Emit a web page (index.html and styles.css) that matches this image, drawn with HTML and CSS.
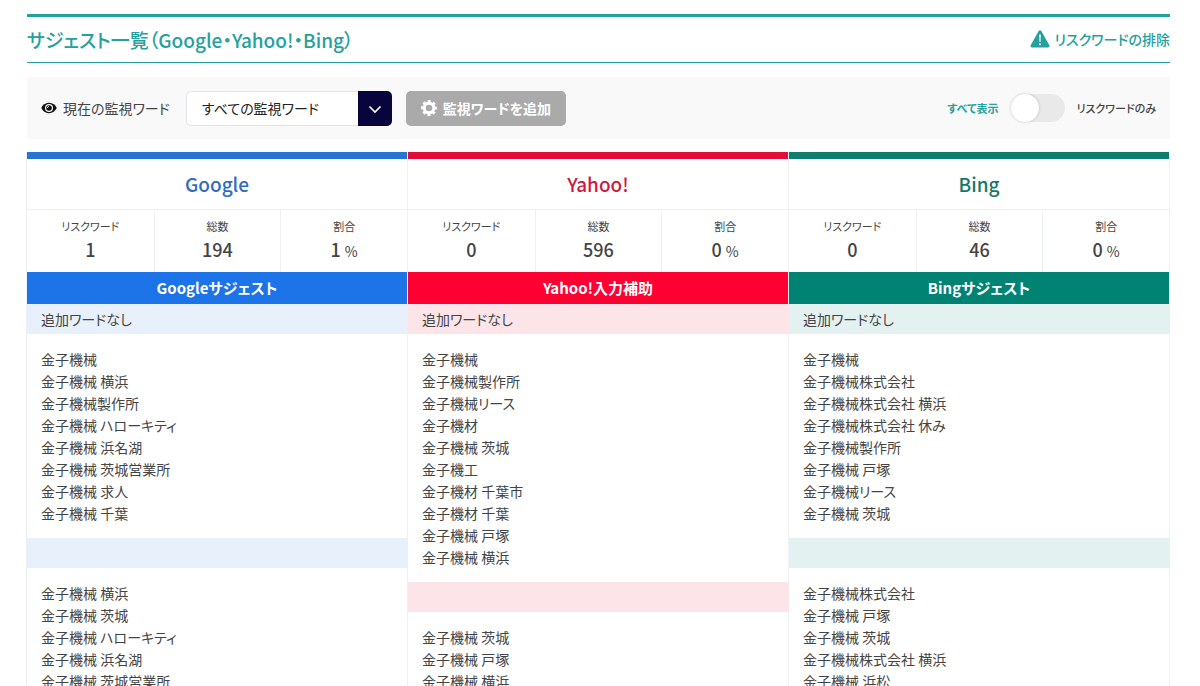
FILE: index.html
```html
<!DOCTYPE html>
<html lang="ja">
<head>
<meta charset="utf-8">
<meta name="viewport" content="width=device-width, initial-scale=1">
<title>サジェスト一覧</title>
<link rel="stylesheet" href="styles.css">
</head>
<body>
<main class="page">
  <header class="page-head">
    <h1 class="page-title">サジェスト一覧（Google・Yahoo!・Bing）</h1>
    <a class="risk-link" href="#">
      <svg class="icon-warning" viewBox="0 0 20 18" aria-hidden="true">
        <path d="M8.700 1.100a1.500 1.500 0 0 1 2.600 0l8 14.200a1.500 1.500 0 0 1-1.300 2.200H2a1.500 1.500 0 0 1-1.300-2.200z" fill="currentColor"/>
        <path d="M9.200 4.500h1.600l-.3 7.500h-1z" fill="#fff"/>
        <circle cx="10" cy="14.200" r="1" fill="#fff"/>
      </svg>
      リスクワードの排除
    </a>
  </header>

  <section class="toolbar">
    <label class="watch-label" for="watch">
      <svg class="icon-eye" viewBox="0 0 16 12" aria-hidden="true">
        <path d="M8 .8C4.400.8 1.600 3 .3 6c1.300 3 4.100 5.200 7.700 5.200S14.400 9 15.700 6C14.400 3 11.600.8 8 .8z" fill="#111"/>
        <circle cx="8" cy="6" r="4" fill="#f9f9f9"/>
        <circle cx="8" cy="6" r="2.800" fill="#111"/>
        <path d="M6.400 6A1.600 1.600 0 0 1 8 4.400" fill="none" stroke="#f9f9f9" stroke-width=".8"/>
      </svg>
      現在の監視ワード
    </label>
    <div class="select-box">
      <select class="select" id="watch"><option>すべての監視ワード</option></select>
      <span class="select-arrow">
        <svg viewBox="0 0 14 9" width="14" height="9" aria-hidden="true"><path d="M1.500 1.500 7 7l5.500-5.500" fill="none" stroke="#fff" stroke-width="1.600"/></svg>
      </span>
    </div>
    <button class="add-button" type="button">
      <svg class="icon-gear" viewBox="0 0 16 16" aria-hidden="true">
        <g fill="none" stroke="#fff">
          <circle cx="8" cy="8" r="4.800" stroke-width="3"/>
          <circle cx="8" cy="8" r="6.800" stroke-width="2.200" stroke-dasharray="3.100 2.240" stroke-dashoffset="1.550"/>
        </g>
      </svg>
      監視ワードを追加
    </button>
    <div class="filter">
      <span class="filter-all">すべて表示</span>
      <input class="switch" type="checkbox" role="switch" id="risk-only">
      <label for="risk-only">リスクワードのみ</label>
    </div>
  </section>

  <div class="engines">
    <section class="engine google">
      <h2 class="engine-name">Google</h2>
      <dl class="stats">
        <div class="stat"><dt>リスクワード</dt><dd>1</dd></div>
        <div class="stat"><dt>総数</dt><dd>194</dd></div>
        <div class="stat"><dt>割合</dt><dd>1 <small>%</small></dd></div>
      </dl>
      <h3 class="band">Googleサジェスト</h3>
      <p class="subband">追加ワードなし</p>
      <ul class="words">
        <li>金子機械</li>
        <li>金子機械 横浜</li>
        <li>金子機械製作所</li>
        <li>金子機械 ハローキティ</li>
        <li>金子機械 浜名湖</li>
        <li>金子機械 茨城営業所</li>
        <li>金子機械 求人</li>
        <li>金子機械 千葉</li>
      </ul>
      <p class="subband"></p>
      <ul class="words">
        <li>金子機械 横浜</li>
        <li>金子機械 茨城</li>
        <li>金子機械 ハローキティ</li>
        <li>金子機械 浜名湖</li>
        <li>金子機械 茨城営業所</li>
      </ul>
    </section>

    <section class="engine yahoo">
      <h2 class="engine-name">Yahoo!</h2>
      <dl class="stats">
        <div class="stat"><dt>リスクワード</dt><dd>0</dd></div>
        <div class="stat"><dt>総数</dt><dd>596</dd></div>
        <div class="stat"><dt>割合</dt><dd>0 <small>%</small></dd></div>
      </dl>
      <h3 class="band">Yahoo!入力補助</h3>
      <p class="subband">追加ワードなし</p>
      <ul class="words">
        <li>金子機械</li>
        <li>金子機械製作所</li>
        <li>金子機械リース</li>
        <li>金子機材</li>
        <li>金子機械 茨城</li>
        <li>金子機工</li>
        <li>金子機材 千葉市</li>
        <li>金子機材 千葉</li>
        <li>金子機械 戸塚</li>
        <li>金子機械 横浜</li>
      </ul>
      <p class="subband"></p>
      <ul class="words">
        <li>金子機械 茨城</li>
        <li>金子機械 戸塚</li>
        <li>金子機械 横浜</li>
      </ul>
    </section>

    <section class="engine bing">
      <h2 class="engine-name">Bing</h2>
      <dl class="stats">
        <div class="stat"><dt>リスクワード</dt><dd>0</dd></div>
        <div class="stat"><dt>総数</dt><dd>46</dd></div>
        <div class="stat"><dt>割合</dt><dd>0 <small>%</small></dd></div>
      </dl>
      <h3 class="band">Bingサジェスト</h3>
      <p class="subband">追加ワードなし</p>
      <ul class="words">
        <li>金子機械</li>
        <li>金子機械株式会社</li>
        <li>金子機械株式会社 横浜</li>
        <li>金子機械株式会社 休み</li>
        <li>金子機械製作所</li>
        <li>金子機械 戸塚</li>
        <li>金子機械リース</li>
        <li>金子機械 茨城</li>
      </ul>
      <p class="subband"></p>
      <ul class="words">
        <li>金子機械株式会社</li>
        <li>金子機械 戸塚</li>
        <li>金子機械 茨城</li>
        <li>金子機械株式会社 横浜</li>
        <li>金子機械 浜松</li>
      </ul>
    </section>
  </div>
</main>
</body>
</html>
```
FILE: styles.css
```css
* { box-sizing: border-box; }

body {
  margin: 0;
  background: #fff;
  color: #444;
  font-family: "Noto Sans CJK JP", sans-serif;
  font-size: 14px;
  line-height: 22px;
  font-feature-settings: "palt";
}

h1, h2, h3, p, ul, dl, dd { margin: 0; padding: 0; }
ul { list-style: none; }

.page { padding: 14px 30px 0 27px; }

.page-head {
  display: flex;
  align-items: center;
  justify-content: space-between;
  height: 49px;
  border-top: 3px solid #24a19c;
  border-bottom: 1px solid #24a19c;
  color: #24a19c;
}

.page-title { font-size: 19px; font-weight: 500; }

.risk-link {
  display: flex;
  align-items: center;
  gap: 5px;
  padding-bottom: 2px;
  color: inherit;
  font-weight: 500;
  text-decoration: none;
}

.icon-warning { width: 20px; height: 18px; }

.toolbar {
  display: flex;
  align-items: center;
  gap: 14px;
  height: 62px;
  margin: 14px 0 13px;
  padding: 0 14px;
  background: #f9f9f9;
}

.watch-label { display: flex; align-items: center; gap: 6px; padding-right: 2px; }
.icon-eye { width: 16px; height: 12px; }

.select-box { position: relative; width: 206px; height: 35px; }

.select {
  width: 100%;
  height: 100%;
  padding: 0 48px 0 15px;
  border: 1px solid #e4e4e8;
  border-radius: 5px;
  appearance: none;
  background: #fff;
  color: #222;
  font: inherit;
  font-feature-settings: inherit;
}

.select-arrow {
  position: absolute;
  top: 0;
  right: 0;
  bottom: 0;
  display: grid;
  place-items: center;
  width: 34px;
  padding-top: 2px;
  border-radius: 0 5px 5px 0;
  background: #08053d;
  pointer-events: none;
}

.add-button {
  display: flex;
  align-items: center;
  justify-content: center;
  gap: 6px;
  width: 160px;
  height: 35px;
  padding: 0;
  border: 0;
  border-radius: 5px;
  background: #aaa;
  color: #fff;
  font: inherit;
  font-weight: 700;
  font-feature-settings: inherit;
}

.icon-gear { width: 16px; height: 16px; }

.filter {
  display: flex;
  align-items: center;
  gap: 12px;
  margin-left: auto;
  font-size: 11px;
  font-weight: 500;
}

.filter-all { color: #24a19c; font-weight: 700; }

.switch {
  width: 54px;
  height: 28px;
  margin: 0;
  border-radius: 14px;
  appearance: none;
  background: #e9e9e9;
}

.switch::before {
  content: "";
  display: block;
  width: 28px;
  height: 28px;
  border-radius: 50%;
  background: #fff;
  box-shadow: 0 0 3px rgba(0, 0, 0, 0.2);
}

.switch:checked::before { margin-left: auto; }

.engines { display: grid; grid-template-columns: repeat(3, 1fr); }

.engine { border-right: 1px solid #edf1f3; }
.engine:first-child { box-shadow: -1px 0 #edf1f3; }

.google { --main: #2874d1; --strong: #1d73e8; --name: #2f6cc0; --pale: #e8f0fc; }
.yahoo { --main: #e00e38; --strong: #ff0033; --name: #d0183f; --pale: #fde4e8; }
.bing { --main: #0e7d6d; --strong: #008373; --name: #13796a; --pale: #e4f1f1; }

.engine-name {
  padding: 14px 0;
  border-top: 7px solid var(--main);
  border-bottom: 1px solid #edf1f3;
  color: var(--name);
  font-size: 19px;
  font-weight: 500;
  text-align: center;
}

.stats { display: grid; grid-template-columns: repeat(3, 1fr); height: 62px; }

.stat { padding-top: 5px; text-align: center; }
.stat + .stat { border-left: 1px solid #edf1f3; }
.stat dt { font-size: 11px; }
.stat dd { font-size: 18px; font-weight: 500; line-height: 24px; }
.stat small { font-size: 14px; font-weight: 400; }

.band {
  background: var(--strong);
  color: #fff;
  font-size: 15px;
  font-weight: 700;
  line-height: 32px;
  text-align: center;
}

.subband {
  height: 30px;
  margin-right: -1px;
  padding: 0 14px;
  background: var(--pale);
  line-height: 30px;
}

.words { padding: 14px; }
```
